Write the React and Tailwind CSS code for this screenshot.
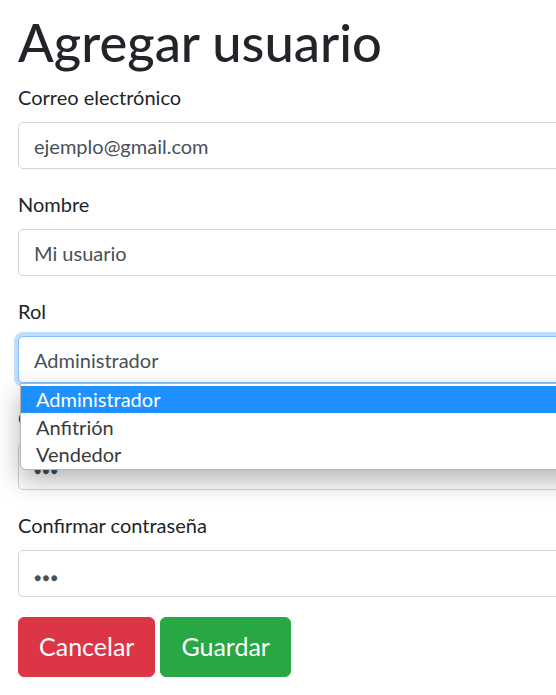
import React from "react";

const Field = ({ label, children }) => {
  return (
    <div className="mb-[20px]">
      <label className="block mb-[10px] leading-[30px]">{label}</label>
      {children}
    </div>
  );
};

const inputCls =
  "h-[47px] w-full border border-[#ced4da] rounded-[5px] bg-white px-[15px] flex items-center text-[#495057]";

const App = () => {
  return (
    <div className="w-[556px] h-[695px] overflow-hidden bg-white font-['Lato',sans-serif] text-[20px] text-[#212529]">
      <div className="pt-[12px] pl-[18px] w-[760px]">
        <h1 className="text-[52.5px] leading-[60px] font-medium mb-[10px]">Agregar usuario</h1>

        <Field label="Correo electrónico">
          <div className={inputCls}>ejemplo@gmail.com</div>
        </Field>

        <Field label="Nombre">
          <div className={inputCls}>Mi usuario</div>
        </Field>

        <Field label="Rol">
          <div className="relative z-10">
            <div className="h-[47px] w-full border border-[#80bdff] rounded-[5px] bg-white px-[15px] flex items-center text-[#495057] shadow-[0_0_0_4px_rgba(0,123,255,0.25)]">
              Administrador
            </div>
            {/* native select popup */}
            <div className="absolute top-full left-[2px] right-0 bg-white border border-[#b5b5b5] rounded-b-[6px] pt-[2px] pb-[1px] shadow-[0_10px_26px_rgba(0,0,0,0.3)]">
              <div className="bg-[#1e90ff] text-white px-[15px] leading-[27px]">Administrador</div>
              <div className="px-[15px] leading-[28px] text-[#3a3a3a]">Anfitrión</div>
              <div className="px-[15px] leading-[27px] text-[#3a3a3a]">Vendedor</div>
            </div>
          </div>
        </Field>

        <Field label="Contraseña">
          <div className={inputCls}>
            <span className="pt-[8px] text-[12px] tracking-[1px] text-[#495057]">●●●</span>
          </div>
        </Field>

        <Field label="Confirmar contraseña">
          <div className={inputCls}>
            <span className="pt-[8px] text-[12px] tracking-[1px] text-[#495057]">●●●</span>
          </div>
        </Field>

        <div className="flex gap-[5px] mt-[2px]">
          <button className="bg-[#dc3545] text-white text-[25px] leading-[37.5px] px-[20px] py-[10px] rounded-[6px] border border-[#dc3545]">
            Cancelar
          </button>
          <button className="bg-[#28a745] text-white text-[25px] leading-[37.5px] px-[20px] py-[10px] rounded-[6px] border border-[#28a745]">
            Guardar
          </button>
        </div>
      </div>
    </div>
  );
};

export default App;
